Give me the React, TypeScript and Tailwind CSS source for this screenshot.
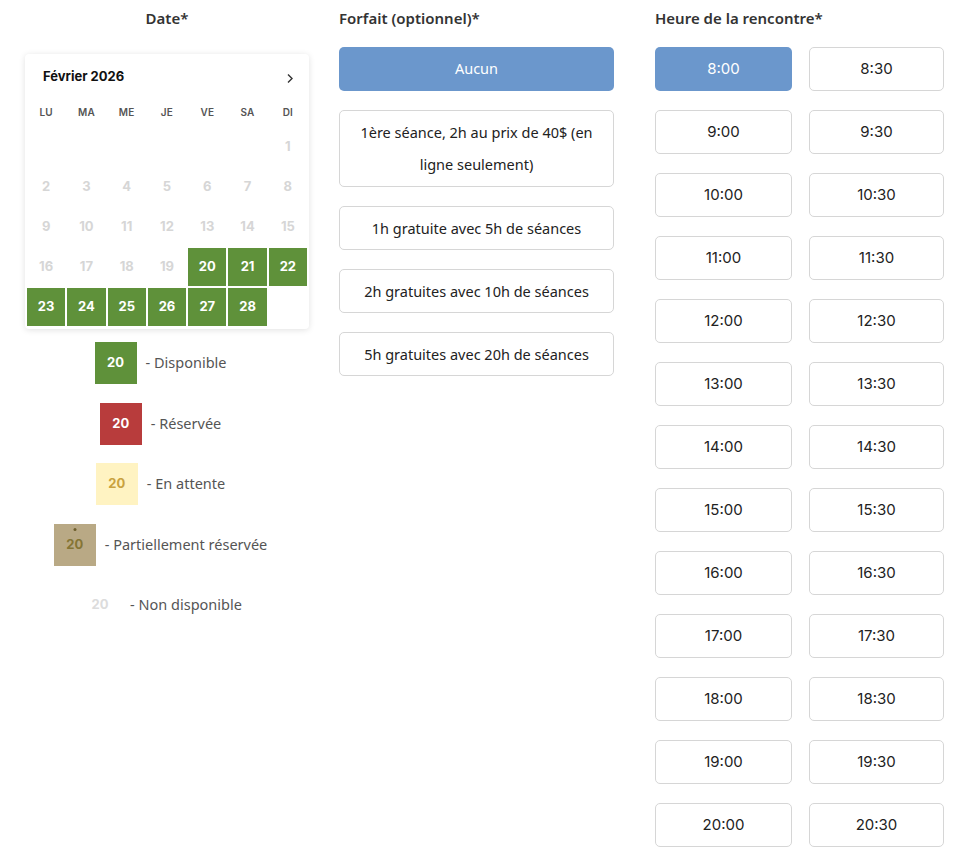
import React from "react";

const head = "font-['Noto_Sans',sans-serif]";
const num = "font-['Inter',sans-serif]";

const times = [
  "8:00","8:30","9:00","9:30","10:00","10:30","11:00","11:30","12:00","12:30",
  "13:00","13:30","14:00","14:30","15:00","15:30","16:00","16:30","17:00","17:30",
  "18:00","18:30","19:00","19:30","20:00","20:30",
];

const forfaits = [
  "1ère séance, 2h au prix de 40$ (en ligne seulement)",
  "1h gratuite avec 5h de séances",
  "2h gratuites avec 10h de séances",
  "5h gratuites avec 20h de séances",
];

function Calendar() {
  const days = ["LU", "MA", "ME", "JE", "VE", "SA", "DI"];
  const cells: (number | null)[] = [null, null, null, null, null, null];
  for (let d = 1; d <= 28; d++) cells.push(d);
  return (
    <div className="mt-[26px] rounded-[4px] bg-white shadow-[0_1px_6px_rgba(0,0,0,0.12)] pt-[14px] pb-[3px] px-[2px]">
      <div className="flex h-[18px] items-center justify-between pl-[16px] pr-[13px]">
        <span className={`${num} text-[13px] font-bold text-[#111]`}>Février 2026</span>
        <svg width="8" height="11" viewBox="0 0 8 11" className="mt-[3px]">
          <path d="M2 1.5 L6 5.5 L2 9.5" fill="none" stroke="#333" strokeWidth="1.4" />
        </svg>
      </div>
      <div className="mt-[18px] grid grid-cols-7 gap-x-[2px] h-[16px] items-center">
        {days.map((d) => (
          <div key={d} className={`${num} text-center text-[10px] font-semibold text-[#555] tracking-[0.02em]`}>{d}</div>
        ))}
      </div>
      <div className="mt-[8px] grid grid-cols-7 gap-[2px]">
        {cells.map((d, i) => {
          const avail = d !== null && d >= 20;
          return (
            <div
              key={i}
              className={`${num} flex h-[38px] items-center justify-center text-[13px] font-bold ${
                avail ? "bg-[#5f913a] text-white" : "text-[#d6d6d6]"
              }`}
            >
              {d ?? ""}
            </div>
          );
        })}
      </div>
    </div>
  );
}

function LegendRow({ box, label }: { box: React.ReactNode; label: string }) {
  return (
    <div className="flex h-[42px] items-center justify-center">
      {box}
      <span className={`${head} ml-[9px] text-[14.5px] text-[#555]`}>- {label}</span>
    </div>
  );
}

function Legend() {
  const base = `${num} relative flex h-[42px] w-[42px] items-center justify-center text-[13px] font-bold`;
  return (
    <div className="mt-[13px] flex flex-col gap-y-[18.5px] pr-[13px]">
      <LegendRow box={<div className={`${base} bg-[#5f913a] text-white`}>20</div>} label="Disponible" />
      <LegendRow box={<div className={`${base} bg-[#b83c3c] text-white`}>20</div>} label="Réservée" />
      <LegendRow box={<div className={`${base} bg-[#fff3c2] text-[#c9a23f]`}>20</div>} label="En attente" />
      <LegendRow
        box={
          <div className={`${base} bg-[#b9a985] text-[#857535]`}>
            <span className="absolute left-1/2 top-[4px] h-[3px] w-[3px] -translate-x-1/2 rounded-full bg-[#6e5f2c]" />
            20
          </div>
        }
        label="Partiellement réservée"
      />
      <LegendRow box={<div className={`${base} text-[#dcdcdc]`}>20</div>} label="Non disponible" />
    </div>
  );
}

export default function App() {
  return (
    <div className="flex w-[960px] bg-white pl-[25px] pb-[12px]">
      <div className="w-[284px]">
        <h2 className={`${head} pt-[8px] text-center text-[15px] font-semibold leading-[20px] text-[#333]`}>Date*</h2>
        <Calendar />
        <Legend />
      </div>
      <div className="ml-[30px] w-[275px]">
        <h2 className={`${head} pt-[8px] text-[15px] font-semibold leading-[20px] text-[#333]`}>Forfait (optionnel)*</h2>
        <div className="mt-[19px] flex flex-col gap-[19px]">
          <button className={`${head} h-[44px] rounded-[5px] bg-[#6b97cc] text-[14.5px] text-white`}>Aucun</button>
          {forfaits.map((f, i) => (
            <button
              key={f}
              className={`${head} rounded-[5px] border border-[#d6d6d6] bg-white px-[12px] pt-[5px] text-[14.5px] leading-[32px] text-[#222] ${
                i === 0 ? "pb-[6px]" : "pb-[5px]"
              }`}
            >
              {f}
            </button>
          ))}
        </div>
      </div>
      <div className="ml-[41px] w-[289px]">
        <h2 className={`${head} pt-[8px] text-[15px] font-semibold leading-[20px] text-[#333]`}>Heure de la rencontre*</h2>
        <div className="mt-[19px] grid grid-cols-[137px_135px] gap-x-[17px] gap-y-[19px]">
          {times.map((t, i) => (
            <button
              key={t}
              className={`${num} h-[44px] rounded-[5px] text-[15px] ${
                i === 0 ? "bg-[#6b97cc] text-white" : "border border-[#d6d6d6] bg-white text-[#222]"
              }`}
            >
              {t}
            </button>
          ))}
        </div>
      </div>
    </div>
  );
}
